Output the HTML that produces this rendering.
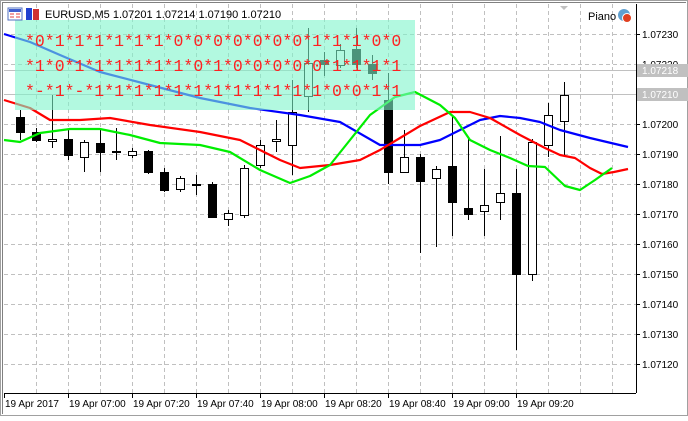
<!DOCTYPE html>
<html><head><style>
body{margin:0;width:688px;height:416px;overflow:hidden;background:#fff;font-family:"Liberation Sans",sans-serif}
</style></head><body>
<svg width="688" height="416" viewBox="0 0 688 416" xmlns="http://www.w3.org/2000/svg">
<rect x="0" y="0" width="688" height="416" fill="#fff"/>
<rect x="0.5" y="0.5" width="687" height="415" fill="none" stroke="#a0a0a0"/>
<line x1="2.5" y1="2" x2="2.5" y2="414" stroke="#808080"/>
<line x1="2" y1="2.5" x2="686" y2="2.5" stroke="#808080"/>
<g stroke="#c0c0c0" stroke-dasharray="4,3">
<line x1="36.5" y1="4" x2="36.5" y2="393"/><line x1="68.5" y1="4" x2="68.5" y2="393"/><line x1="100.5" y1="4" x2="100.5" y2="393"/><line x1="132.5" y1="4" x2="132.5" y2="393"/><line x1="164.5" y1="4" x2="164.5" y2="393"/><line x1="196.5" y1="4" x2="196.5" y2="393"/><line x1="228.5" y1="4" x2="228.5" y2="393"/><line x1="260.5" y1="4" x2="260.5" y2="393"/><line x1="292.5" y1="4" x2="292.5" y2="393"/><line x1="324.5" y1="4" x2="324.5" y2="393"/><line x1="356.5" y1="4" x2="356.5" y2="393"/><line x1="388.5" y1="4" x2="388.5" y2="393"/><line x1="420.5" y1="4" x2="420.5" y2="393"/><line x1="452.5" y1="4" x2="452.5" y2="393"/><line x1="484.5" y1="4" x2="484.5" y2="393"/><line x1="516.5" y1="4" x2="516.5" y2="393"/><line x1="548.5" y1="4" x2="548.5" y2="393"/><line x1="580.5" y1="4" x2="580.5" y2="393"/><line x1="612.5" y1="4" x2="612.5" y2="393"/>
<line x1="4" y1="34.5" x2="636" y2="34.5"/><line x1="4" y1="64.5" x2="636" y2="64.5"/><line x1="4" y1="124.5" x2="636" y2="124.5"/><line x1="4" y1="154.5" x2="636" y2="154.5"/><line x1="4" y1="184.5" x2="636" y2="184.5"/><line x1="4" y1="214.5" x2="636" y2="214.5"/><line x1="4" y1="244.5" x2="636" y2="244.5"/><line x1="4" y1="274.5" x2="636" y2="274.5"/><line x1="4" y1="304.5" x2="636" y2="304.5"/><line x1="4" y1="334.5" x2="636" y2="334.5"/><line x1="4" y1="364.5" x2="636" y2="364.5"/>
</g>
<line x1="4" y1="70.5" x2="636" y2="70.5" stroke="#c0c0c0"/>
<line x1="4" y1="94.5" x2="636" y2="94.5" stroke="#c0c0c0"/>
<g stroke="#000" stroke-width="1">
<!-- wick lines -->
<path d="M20.5 110V140M36.5 128V142M52.5 95V148M68.5 130V160M84.5 140V172M100.5 130V172M116.5 128V160M132.5 148V158M148.5 150V174M164.5 168V192M180.5 176V192M196.5 175V195M212.5 182V218M228.5 210V226M244.5 165V218M260.5 140V168M276.5 120V152M292.5 80V175M308.5 28V112M324.5 52V76M340.5 44V68M356.5 28V68M372.5 55V80M388.5 73V184M404.5 130V172M420.5 154V253M436.5 166V247M452.5 115V236M468.5 139V220M484.5 169V236M500.5 136V220M516.5 169V350M532.5 139V281M548.5 103V157M564.5 82V155"/>
</g>
<g stroke="#000" fill="#000">
<rect x="16.5" y="117.5" width="8" height="15"/><rect x="32.5" y="132.5" width="8" height="8"/><rect x="64.5" y="139.5" width="8" height="16"/><rect x="96.5" y="143.5" width="8" height="9"/><rect x="144.5" y="151.5" width="8" height="21"/><rect x="160.5" y="172.5" width="8" height="18"/><rect x="208.5" y="184.5" width="8" height="33"/><rect x="320.5" y="60.5" width="8" height="4"/><rect x="352.5" y="49.5" width="8" height="15"/><rect x="368.5" y="64.5" width="8" height="9"/><rect x="384.5" y="100.5" width="8" height="72"/><rect x="416.5" y="157.5" width="8" height="24"/><rect x="448.5" y="166.5" width="8" height="36"/><rect x="464.5" y="208.5" width="8" height="6"/><rect x="512.5" y="193.5" width="8" height="81"/>
</g>
<g stroke="#000" fill="#fff">
<rect x="48.5" y="139.5" width="8" height="2"/><rect x="80.5" y="142.5" width="8" height="15"/><rect x="112.5" y="151.5" width="8" height="1"/><rect x="128.5" y="151.5" width="8" height="4"/><rect x="176.5" y="178.5" width="8" height="11"/><rect x="192.5" y="184.5" width="8" height="1"/><rect x="224.5" y="213.5" width="8" height="6"/><rect x="240.5" y="168.5" width="8" height="47"/><rect x="256.5" y="145.5" width="8" height="20"/><rect x="272.5" y="139.5" width="8" height="2"/><rect x="288.5" y="112.5" width="8" height="33"/><rect x="304.5" y="63.5" width="8" height="33"/><rect x="336.5" y="50.5" width="8" height="15"/><rect x="400.5" y="157.5" width="8" height="15"/><rect x="432.5" y="169.5" width="8" height="9"/><rect x="480.5" y="205.5" width="8" height="6"/><rect x="496.5" y="193.5" width="8" height="9"/><rect x="528.5" y="142.5" width="8" height="132"/><rect x="544.5" y="115.5" width="8" height="30"/><rect x="560.5" y="95.5" width="8" height="26"/>
</g>
<g fill="none" stroke-width="2.2" stroke-linejoin="round">
<polyline stroke="#0000ff" points="4,34 30,42 60,55 100,72 150,85 200,98 250,108 300,115 340,122 380,145 420,145 440,140 460,130 480,120 500,116 520,118 540,122 560,130 590,138 628,147"/>
<polyline stroke="#ff0000" points="4,100 30,108 50,120 80,120 110,118 150,125 200,132 240,140 260,150 280,160 300,168 330,165 360,160 380,150 400,138 420,126 450,112 470,112 490,118 520,135 545,148 560,155 575,158 590,168 602,174 614,172 628,169"/>
<polyline stroke="#00ee00" points="4,140 20,142 40,133 70,129 100,129 130,135 160,143 200,145 230,152 260,170 290,183 310,176 330,165 350,140 370,115 395,97 415,92 440,105 455,118 470,140 490,150 510,158 528,166 545,167 565,186 580,190 595,180 612,168"/>
</g>
<rect x="15" y="20" width="400" height="90" fill="#7ff5cc" fill-opacity="0.6"/>
<g font-family="Liberation Mono, monospace" font-size="16.5" fill="#ff2020">
<text x="25" y="46">*0*1*1*1*1*1*1*0*0*0*0*0*0*0*1*1*1*0*0</text>
<text x="25" y="71">*1*0*1*1*1*1*1*1*0*1*0*0*0*0*0*1*1*1*1</text>
<text x="25" y="96">*-*1*-*1*1*1*1*1*1*1*1*1*1*1*1*0*0*1*1</text>
</g>
<line x1="636.5" y1="4" x2="636.5" y2="393" stroke="#000"/>
<line x1="4" y1="393.5" x2="636" y2="393.5" stroke="#000"/>
<g stroke="#000">
<path d="M636 34.5h4M636 64.5h4M636 124.5h4M636 154.5h4M636 184.5h4M636 214.5h4M636 244.5h4M636 274.5h4M636 304.5h4M636 334.5h4M636 364.5h4"/>
<path d="M4.5 393v5M68.5 393v5M132.5 393v5M196.5 393v5M260.5 393v5M324.5 393v5M388.5 393v5M452.5 393v5M516.5 393v5"/>
</g>
<g font-size="10" fill="#000" font-family="Liberation Sans, sans-serif">
<text x="642" y="38">1.07230</text><text x="642" y="68">1.07220</text><text x="642" y="128">1.07200</text><text x="642" y="158">1.07190</text><text x="642" y="188">1.07180</text><text x="642" y="218">1.07170</text><text x="642" y="248">1.07160</text><text x="642" y="278">1.07150</text><text x="642" y="308">1.07140</text><text x="642" y="338">1.07130</text><text x="642" y="368">1.07120</text>
<text x="5" y="407">19 Apr 2017</text><text x="69" y="407">19 Apr 07:00</text><text x="133" y="407">19 Apr 07:20</text><text x="197" y="407">19 Apr 07:40</text><text x="261" y="407">19 Apr 08:00</text><text x="325" y="407">19 Apr 08:20</text><text x="389" y="407">19 Apr 08:40</text><text x="453" y="407">19 Apr 09:00</text><text x="517" y="407">19 Apr 09:20</text>
</g>
<rect x="637" y="64" width="51" height="13" fill="#c0c0c0"/><text x="642" y="74" font-size="10" fill="#fff">1.07218</text>
<rect x="637" y="88" width="51" height="13" fill="#c0c0c0"/><text x="642" y="98" font-size="10" fill="#fff">1.07210</text>
<rect x="8" y="8" width="14" height="12" fill="#fff" stroke="#5070c0"/><rect x="9" y="9" width="12" height="3" fill="#4060d0"/><path d="M10 14h4M10 17h4M16 14h4M16 17h4" stroke="#e04040"/>
<rect x="26" y="8" width="6" height="12" fill="#2040d0"/><rect x="33" y="9" width="6" height="11" fill="#d03030"/>
<text x="45" y="18" font-size="11" fill="#000">EURUSD,M5  1.07201 1.07214 1.07190 1.07210</text>
<text x="588" y="20" font-size="11" fill="#000">Piano</text>
<circle cx="624" cy="15" r="6" fill="#60a0d0"/><circle cx="627" cy="18" r="4.5" fill="#e04020" stroke="#fff"/>
<path d="M140 6l4 4 4-4z" fill="#c0c0c0" transform="translate(420,0)"/>
</svg>
</body></html>
